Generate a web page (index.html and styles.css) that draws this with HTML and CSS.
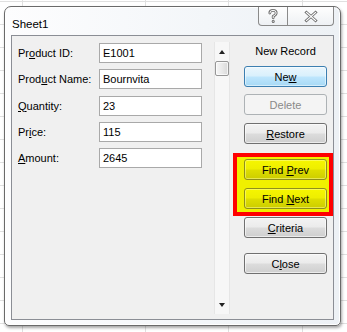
FILE: index.html
```html
<!DOCTYPE html>
<html lang="en">
<head>
  <meta charset="UTF-8" />
  <title>Sheet1</title>
  <link rel="stylesheet" href="styles.css">
</head>
<body>
  <div class="window">
    <div class="titlebar">
      <span class="title">Sheet1</span>
      <div class="caption-btns">
        <div class="cap-btn help">
          <svg width="28" height="18" viewBox="0 0 28 18">
            <g fill="none" stroke-linecap="round" stroke-linejoin="round">
              <path d="M10.8 6 Q10.8 3.3 14 3.3 Q17.2 3.3 17.2 6 Q17.2 7.9 14.2 9.2 L14.2 10.8" stroke="#707070" stroke-width="2.8"/>
              <path d="M14.2 14.2 L14.2 14.4" stroke="#707070" stroke-width="3"/>
              <path d="M10.8 6 Q10.8 3.3 14 3.3 Q17.2 3.3 17.2 6 Q17.2 7.9 14.2 9.2 L14.2 10.8" stroke="#fff" stroke-width="1"/>
              <path d="M14.2 14.2 L14.2 14.4" stroke="#fff" stroke-width="1"/>
            </g>
          </svg>
        </div>
        <div class="cap-btn close">
          <svg width="45" height="18" viewBox="0 0 45 18">
            <g fill="none" stroke-linecap="square">
              <path d="M18.5 5.5 L27.5 13.5 M27.5 5.5 L18.5 13.5" stroke="#707070" stroke-width="3"/>
              <path d="M18.5 5.5 L27.5 13.5 M27.5 5.5 L18.5 13.5" stroke="#fff" stroke-width="1.1"/>
            </g>
          </svg>
        </div>
      </div>
    </div>

    <div class="panel">
      <div class="fields">
        <div class="row"><label>Pr<u>o</u>duct ID:</label><div class="box">E1001</div></div>
        <div class="row"><label>Prod<u>u</u>ct Name:</label><div class="box">Bournvita</div></div>
        <div class="row"><label><u>Q</u>uantity:</label><div class="box">23</div></div>
        <div class="row"><label>Pr<u>i</u>ce:</label><div class="box">115</div></div>
        <div class="row"><label><u>A</u>mount:</label><div class="box">2645</div></div>
      </div>

      <div class="scrollbar">
        <div class="arrow up"></div>
        <div class="thumb"></div>
        <div class="arrow down"></div>
      </div>

      <div class="actions">
        <div class="record">New Record</div>
        <button class="btn default">Ne<u>w</u></button>
        <button class="btn disabled">Delete</button>
        <button class="btn gap-8"><u>R</u>estore</button>
        <div class="find">
          <button class="btn yellow">Find <u>P</u>rev</button>
          <button class="btn yellow">Find <u>N</u>ext</button>
        </div>
        <button class="btn gap-1"><u>C</u>riteria</button>
        <button class="btn gap-15">C<u>l</u>ose</button>
      </div>
    </div>
  </div>
</body>
</html>
```

FILE: styles.css
```css
html, body {
  height: 100%;
}
body {
  margin: 0;
  overflow: hidden;
  font-family: "Liberation Sans", Arial, sans-serif;
  font-size: 11px;
  color: #000;
  background-color: #fff;
  background-image:
    linear-gradient(#e0e0e0, #e0e0e0),
    linear-gradient(#e0e0e0, #e0e0e0),
    linear-gradient(#e0e0e0, #e0e0e0),
    linear-gradient(#e0e0e0, #e0e0e0),
    repeating-linear-gradient(to bottom, #e0e0e0 0, #e0e0e0 1px, transparent 1px, transparent 23px);
  background-size: 1px 100%, 1px 100%, 1px 100%, 1px 100%, 100% 100%;
  background-position: 22px 0, 145px 0, 228px 0, 302px 0, 0 1px;
  background-repeat: no-repeat;
}

/* dialog frame */
.window {
  box-sizing: border-box;
  width: 337px;
  height: 320px;
  margin: 6px 0 0 4px;
  padding: 0 6px;
  border: 1px solid #6a6a6a;
  border-radius: 7px 7px 5px 5px;
  background: linear-gradient(to right, #fdfdfe, #f3f6f9 60%, #edf1f5);
  box-shadow: inset 0 0 0 1px #fff, 1px 2px 3px rgba(0,0,0,0.35);
}
.titlebar {
  height: 28px;
  display: flex;
  justify-content: space-between;
  align-items: flex-start;
}
.title {
  margin: 9px 0 0 1px;
  font-size: 11.5px;
  line-height: 16px;
}
.caption-btns {
  display: flex;
  height: 19px;
  border: 1px solid #8a8a8a;
  border-top: none;
  border-radius: 0 0 4px 4px;
  background: linear-gradient(#fefefe, #eef1f4);
  box-sizing: border-box;
  overflow: hidden;
}
.cap-btn {
  height: 18px;
}
.cap-btn svg {
  display: block;
}
.help {
  width: 28px;
  border-right: 1px solid #8a8a8a;
}
.close {
  width: 45px;
}

/* inner panel */
.panel {
  box-sizing: border-box;
  height: 285px;
  border: 1px solid #8b8e95;
  background: #f0f0f0;
  display: flex;
}
.fields {
  box-sizing: border-box;
  width: 202px;
  padding: 7px 0 0 6px;
  display: flex;
  flex-direction: column;
  gap: 6.25px;
}
.row {
  display: flex;
  align-items: center;
  height: 20px;
}
.row label {
  width: 81px;
}
.box {
  box-sizing: border-box;
  width: 103px;
  height: 20px;
  padding: 0 3px;
  line-height: 18px;
  border: 1px solid #a9a9a9;
  background: #fff;
}

.scrollbar {
  box-sizing: border-box;
  width: 16px;
  height: 272px;
  margin-top: 6px;
  border-left: 1px solid #e6e6e6;
  border-right: 1px solid #e6e6e6;
  background: #f7f7f7;
  display: flex;
  flex-direction: column;
  align-items: center;
}
.arrow {
  width: 0;
  height: 0;
  border-left: 3.5px solid transparent;
  border-right: 3.5px solid transparent;
}
.arrow.up {
  margin-top: 8px;
  border-bottom: 4px solid #222;
}
.arrow.down {
  margin: auto 0 7px;
  border-top: 4px solid #222;
}
.thumb {
  box-sizing: border-box;
  width: 14px;
  height: 15px;
  margin-top: 7px;
  border: 1px solid #979797;
  border-radius: 2px;
  background: linear-gradient(to right, #f6f6f6, #e9e9e9 50%, #d9d9d9);
  box-shadow: inset 0 0 0 1px rgba(255,255,255,0.7);
}

/* buttons */
.actions {
  box-sizing: border-box;
  width: 103px;
  padding-left: 3px;
}
.record {
  width: 83px;
  margin: 7px 0 0 11px;
  line-height: 16px;
  text-align: center;
}
.btn {
  display: block;
  box-sizing: border-box;
  width: 83px;
  height: 21px;
  margin: 7px 0 0 11px;
  padding: 0;
  font-family: inherit;
  font-size: 11px;
  color: #000;
  border: 1px solid #707070;
  border-radius: 3px;
  background: linear-gradient(#f3f3f3, #ebebeb 48%, #dcdcdc 52%, #cfcfcf);
  box-shadow: inset 0 0 0 1px rgba(255,255,255,0.6);
}
.btn.default {
  border-color: #3c7fb1;
  background: linear-gradient(#eaf6fd, #d9f0fc 48%, #bee6fd 52%, #a7d9f5);
  box-shadow: inset 0 0 0 1px rgba(255,255,255,0.5);
}
.btn.disabled {
  color: #8a8a8a;
  border-color: #adb2b5;
  background: #f4f4f4;
  box-shadow: none;
}
.gap-8 { margin-top: 8px; }
.gap-1 { margin-top: 1px; }
.gap-15 { margin-top: 15px; }

.find {
  box-sizing: border-box;
  width: 100px;
  margin-top: 9px;
  padding: 2px 0 3px 7px;
  border: 4px solid #f00;
  background: #f0f000;
}
.find .btn {
  margin: 0;
}
.find .btn + .btn {
  margin-top: 8px;
}
.btn.yellow {
  border-color: #8e8e1c;
  background: linear-gradient(#f6f600, #eeee00 48%, #dede00 52%, #cdcd00);
  box-shadow: inset 0 0 0 1px rgba(255,255,160,0.5);
}
```
